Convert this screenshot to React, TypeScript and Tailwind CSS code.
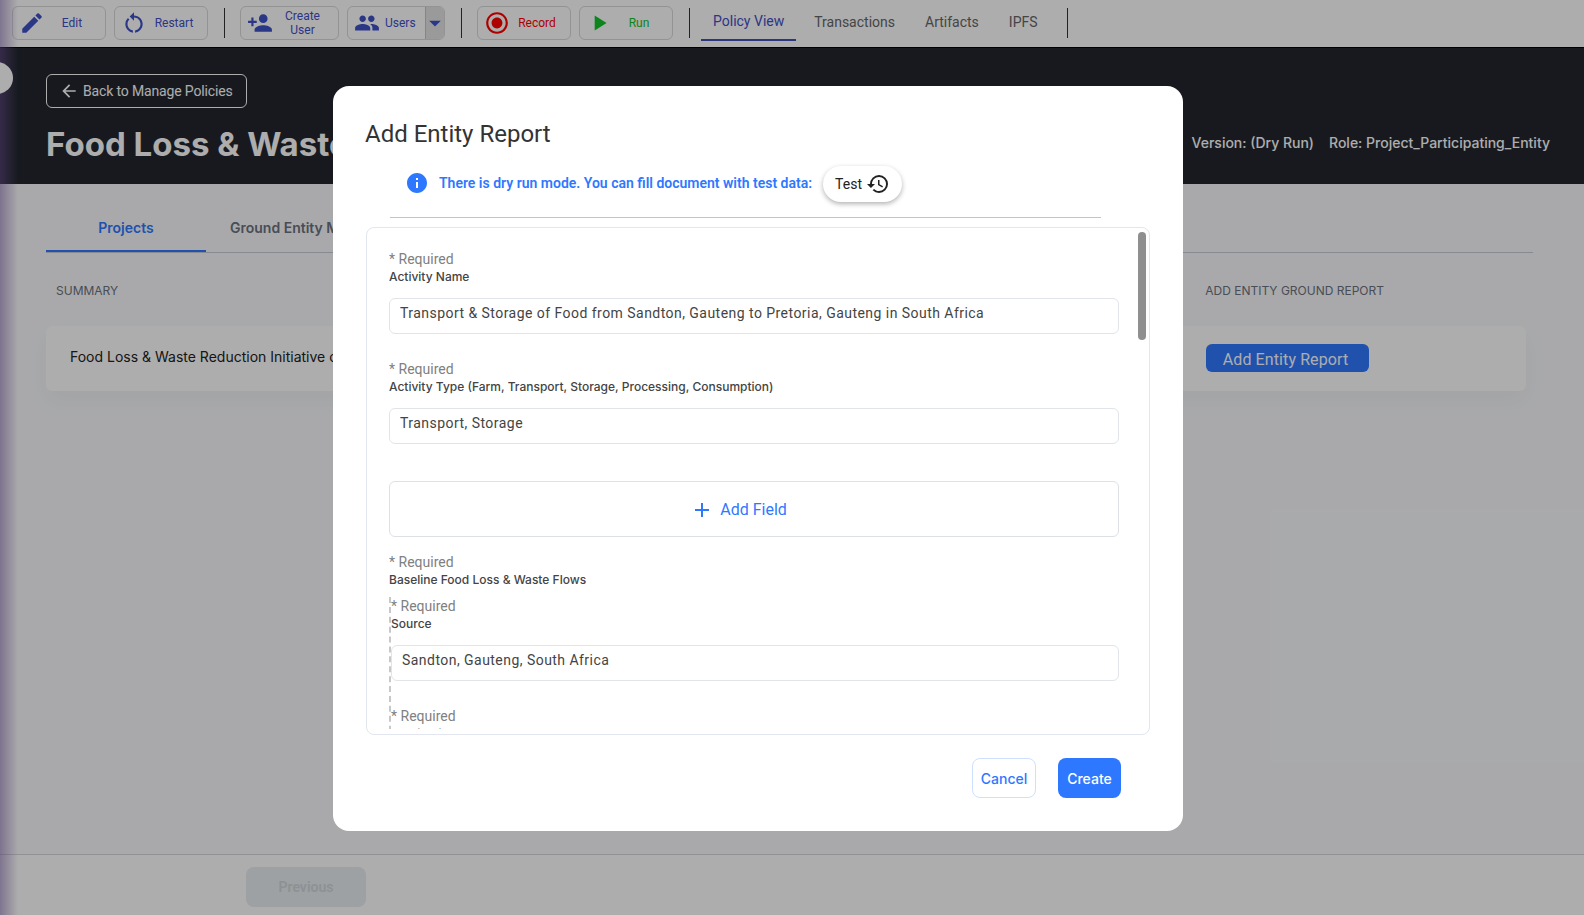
import { ReactNode } from "react";
import { MdAdd, MdArrowBack, MdArrowDropDown, MdEdit, MdHistory, MdInfo, MdPeople, MdPersonAdd, MdPlayArrow, MdRadioButtonChecked, MdRestartAlt } from "react-icons/md";

function ToolButton({ icon, text, className }: { icon: ReactNode; text: ReactNode; className: string }) {
  return (
    <button className={"h-[34px] w-[94px] flex items-center rounded-md border border-[#d9d9d9] pl-[4px] text-xs leading-[14px] " + className}>
      <span className="w-[30px] flex justify-center">{icon}</span>
      <span className="flex-1 pr-2 text-center">{text}</span>
    </button>
  );
}

function Field({ label, value }: { label: string; value: string }) {
  return (
    <div className="mb-[26px]">
      <div className="text-sm leading-[18px] text-[#808080]">* Required</div>
      <div className="mt-[1px] font-['Inter',sans-serif] text-xs leading-[16px] font-medium text-[#444]">{label}</div>
      <div className="mt-[13px] h-[36px] rounded-md border border-[#e1e4e8] px-[10px] pt-[4px] text-sm leading-[20px] tracking-[0.46px] text-[#444]">{value}</div>
    </div>
  );
}

function Dialog() {
  return (
    <div className="absolute left-[333px] top-[86px] h-[745px] w-[850px] rounded-2xl bg-white pl-[32px] pt-[32px] font-['Roboto',sans-serif]">
      <h2 className="text-2xl leading-[32px] text-[#333]">Add Entity Report</h2>
      <div className="mt-[15px] flex h-[36px] items-center pl-[40px]">
        <MdInfo className="mr-[10px] text-[24px] text-[#2e78ff]" />
        <span className="text-sm font-semibold text-[#2e78ff]">There is dry run mode. You can fill document with test data:</span>
        <button className="ml-[11px] mt-[1px] flex h-[36px] w-[79px] items-center justify-center gap-[4px] rounded-full bg-white text-sm text-[#222] shadow-[0_2px_5px_rgba(0,0,0,0.3)]">
          Test <MdHistory className="text-[24px]" />
        </button>
      </div>
      <div className="ml-[25px] mt-[16px] h-px w-[711px] bg-[#c4c4c4]" />
      <div className="relative ml-[1px] mt-[9px] h-[508px] w-[784px] overflow-hidden rounded-lg border border-[#e2e6ee] pb-[5px] pl-[22px] pr-[30px] pt-[22px]">
        <div className="absolute right-[3px] top-[4px] h-[108px] w-[8px] rounded-full bg-[#8f8f8f]" />
        <div className="h-full overflow-hidden">
          <Field label="Activity Name" value="Transport & Storage of Food from Sandton, Gauteng to Pretoria, Gauteng in South Africa" />
          <Field label="Activity Type (Farm, Transport, Storage, Processing, Consumption)" value="Transport, Storage" />
          <button className="mt-[37px] flex h-[56px] w-full items-center justify-center gap-[6px] rounded-md border border-[#dde0e5] pr-[31px] pt-[1px] text-base text-[#2e78ff]">
            <MdAdd className="text-[24px]" /> Add Field
          </button>
          <div className="mt-[16px] text-sm leading-[18px] text-[#808080]">* Required</div>
          <div className="mt-[1px] font-['Inter',sans-serif] text-xs leading-[16px] font-medium text-[#444]">Baseline Food Loss & Waste Flows</div>
          <div className="mt-[9px] border-l-2 border-dashed border-[#c8c8c8]">
            <Field label="Source" value="Sandton, Gauteng, South Africa" />
            <Field label="Destination" value="Pretoria, Gauteng, South Africa" />
          </div>
        </div>
      </div>
      <div className="ml-[607px] mt-[23px] flex gap-[22px] font-['Inter',sans-serif]">
        <button className="h-[40px] w-[64px] rounded-lg border border-[#cfe0ff] pt-[2px] text-sm font-medium text-[#2e78ff]">Cancel</button>
        <button className="h-[40px] w-[63px] rounded-lg bg-[#2e78ff] pt-[2px] text-sm font-medium text-white">Create</button>
      </div>
    </div>
  );
}

export default function App() {
  return (
    <div className="relative h-[915px] w-full overflow-hidden bg-[#f9fafc] font-['Roboto',sans-serif]">
      {/* toolbar */}
      <div className="flex h-[48px] items-center border-b border-black bg-white pb-[1px] pl-[12px]">
        <div className="flex gap-2">
          <ToolButton icon={<MdEdit className="text-[26px]" />} text="Edit" className="text-[#3f51c8]" />
          <ToolButton icon={<MdRestartAlt className="text-[26px]" />} text="Restart" className="text-[#3f51c8]" />
        </div>
        <div className="ml-4 mr-[15px] h-[30px] w-px bg-[#333]" />
        <div className="flex gap-2">
          <ToolButton icon={<MdPersonAdd className="text-[26px]" />} text={<>Create<br />User</>} className="w-[99px] text-[#3f51c8]" />
          <div className="flex h-[34px] w-[98px] overflow-hidden rounded-md border border-[#d9d9d9] text-xs text-[#3f51c8]">
            <div className="flex flex-1 items-center gap-[5px] pl-[6px]">
              <MdPeople className="text-[26px]" /> Users
            </div>
            <div className="flex w-[19px] shrink-0 items-center justify-center border-l border-[#c4c4c4] bg-[#e4e4e4]">
              <MdArrowDropDown className="shrink-0 text-[28px]" />
            </div>
          </div>
        </div>
        <div className="ml-4 mr-[15px] h-[30px] w-px bg-[#333]" />
        <div className="flex gap-2">
          <ToolButton icon={<MdRadioButtonChecked className="text-[26px]" />} text="Record" className="text-[#ff0000]" />
          <ToolButton icon={<MdPlayArrow className="text-[26px]" />} text="Run" className="text-[#12c42a]" />
        </div>
        <div className="ml-4 mr-[15px] h-[30px] w-px bg-[#333]" />
        <div className="flex h-full items-start gap-[6px] text-sm text-[#666]">
          <div className="-ml-[4px] flex h-[41px] items-center border-b-2 border-[#3f51b5] px-3 pt-[3px] text-[#3f51c8]">Policy View</div>
          <div className="flex h-[41px] items-center px-3 pt-[3px]">Transactions</div>
          <div className="flex h-[41px] items-center px-3 pt-[3px]">Artifacts</div>
          <div className="flex h-[41px] items-center px-3 pt-[3px]">IPFS</div>
        </div>
        <div className="ml-[17px] h-[30px] w-px bg-[#333]" />
      </div>

      {/* policy header */}
      <div className="flex h-[136px] bg-[#23262f] pl-[46px] pr-[34px] text-white">
        <div className="flex-1">
          <button className="mt-[26px] flex h-[34px] w-[201px] items-center gap-[4px] rounded-md border border-white pl-[12px] text-sm tracking-[-0.15px]">
            <MdArrowBack className="text-[20px]" /> Back to Manage Policies
          </button>
          <h1 className="mt-[16px] font-['Inter',sans-serif] text-[33px] leading-[40px] font-bold whitespace-nowrap">Food Loss & Waste Reduction Initiative</h1>
        </div>
        <div className="mt-[85px] flex h-[20px] gap-[15px] font-['Inter',sans-serif] text-sm font-medium">
          <span>Version: (Dry Run)</span>
          <span>Role: Project_Participating_Entity</span>
        </div>
      </div>

      {/* content */}
      <div className="px-[46px] font-['Inter',sans-serif]">
        <div className="mr-[5px] flex h-[69px] items-end border-b border-[#c8ccd4] text-sm font-semibold">
          <div className="flex h-[34px] w-[160px] items-start justify-center border-b-2 border-[#2e78ff] text-[#2e78ff]">Projects</div>
          <div className="ml-[24px] h-[34px] text-[#6b7280]">Ground Entity Monitoring Reports</div>
        </div>
        <div className="flex h-[73px] items-center justify-between px-[10px] pt-[2px] text-xs text-[#6b7280]">
          <span>SUMMARY</span>
          <span className="mr-[144px]">ADD ENTITY GROUND REPORT</span>
        </div>
        <div className="mr-[12px] flex h-[65px] items-center justify-between rounded-md bg-white pl-[24px] pr-[157px] text-sm text-[#222] shadow-[0_10px_24px_rgba(0,0,0,0.04)]">
          <span className="-mt-1">Food Loss & Waste Reduction Initiative of Gauteng</span>
          <button className="-mt-[1px] h-[28px] w-[163px] rounded-md bg-[#2e78ff] pr-[4px] pt-[3px] font-['Roboto',sans-serif] text-base tracking-[0.1px] text-white">Add Entity Report</button>
        </div>
      </div>

      {/* footer */}
      <div className="absolute bottom-0 left-0 right-0 h-[61px] border-t border-[#d6d8dc] bg-white pl-[246px] pt-[12px]">
        <button className="h-[40px] w-[120px] rounded-lg bg-[#e8edf0] text-sm font-semibold text-[#d2d6da]">Previous</button>
      </div>

      {/* sidebar edge */}
      <div className="absolute inset-y-0 left-0 w-[18px] bg-gradient-to-r from-[#7a5aa8]/50 to-transparent" />
      <div className="absolute -left-[19px] top-[62px] h-[32px] w-[32px] rounded-full bg-white" />

      {/* modal */}
      <div className="absolute inset-0 bg-black/[.32]" />
      <Dialog />
    </div>
  );
}
